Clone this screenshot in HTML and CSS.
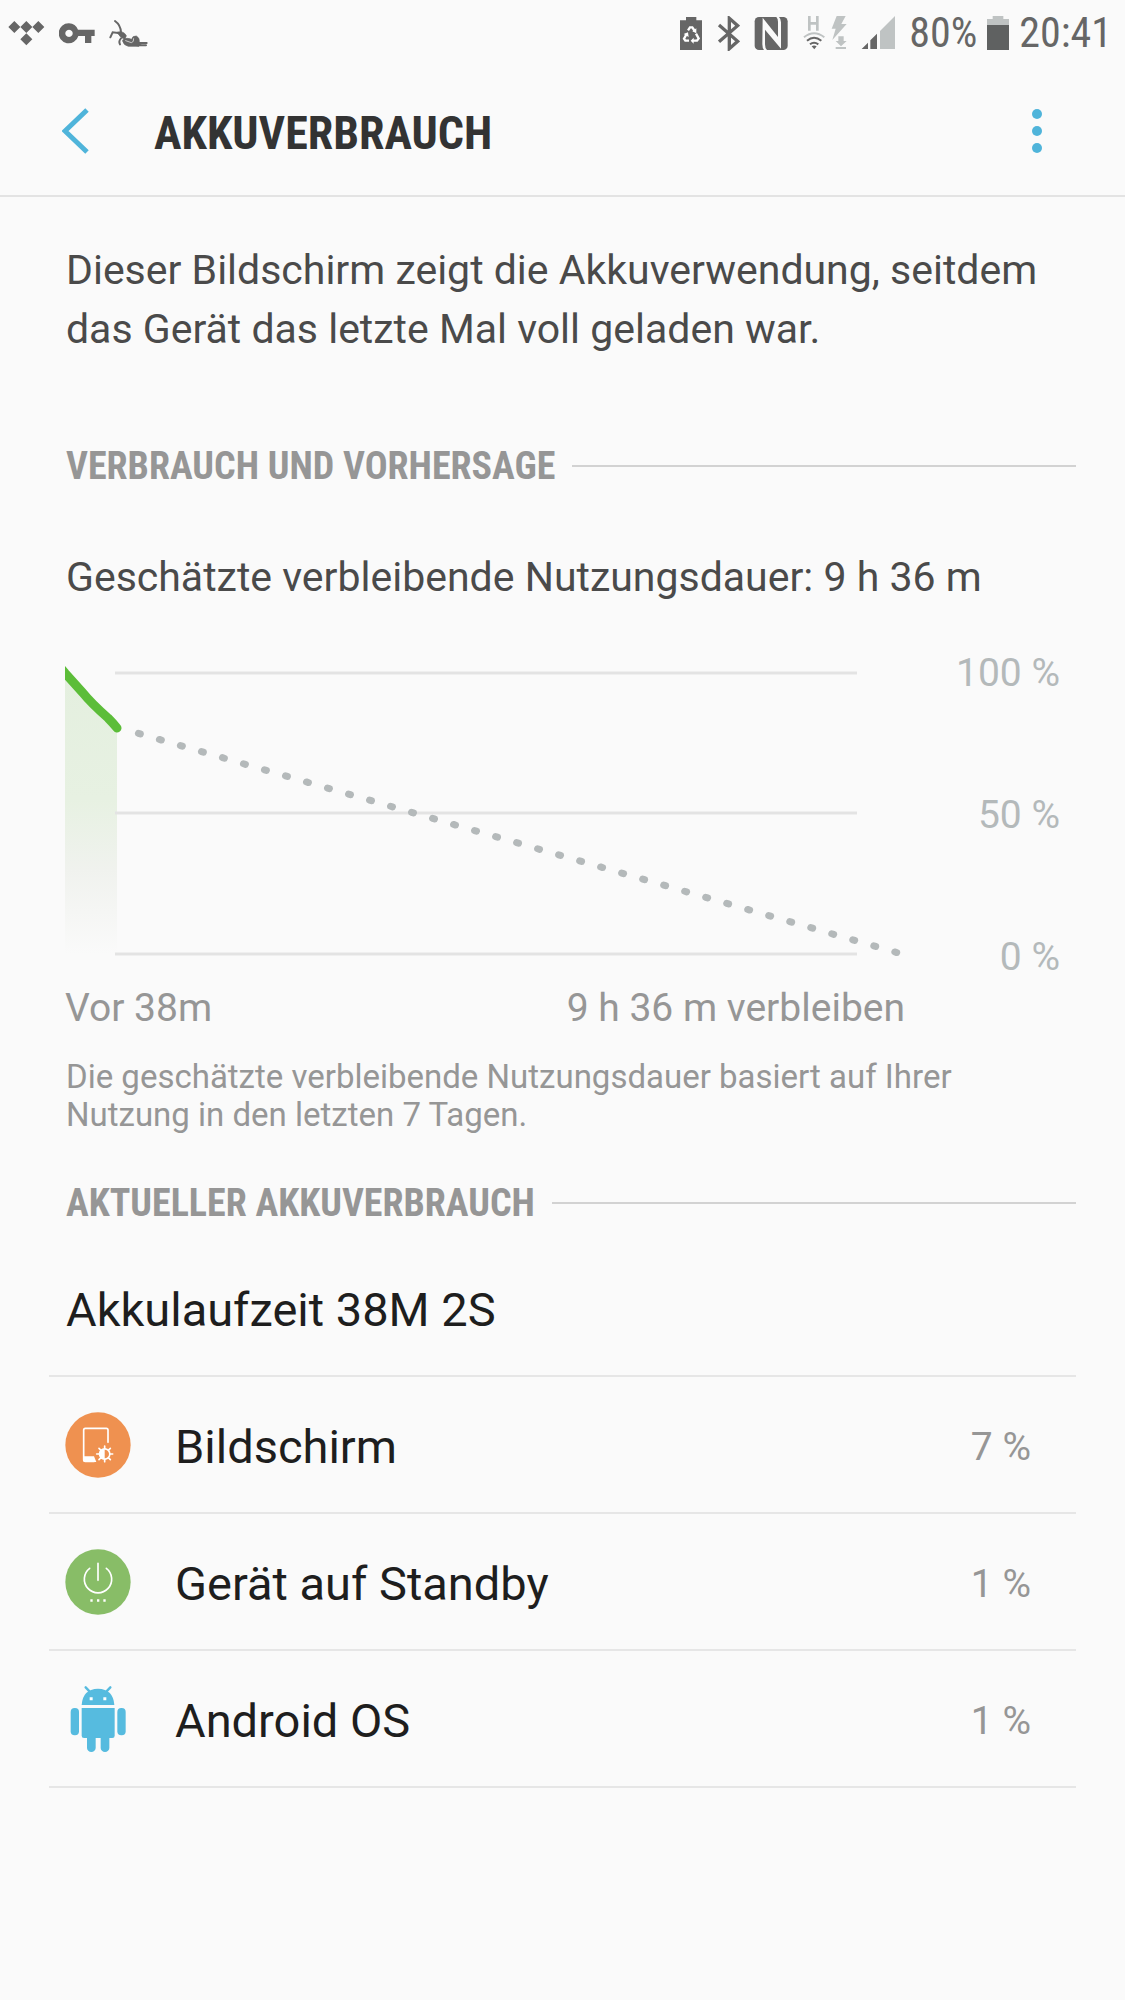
FILE: index.html
```html
<!DOCTYPE html>
<html lang="de">
<head>
    <meta charset="UTF-8">
    <meta name="viewport" content="width=device-width, initial-scale=1.0">
    <title>Akkuverbrauch</title>
    <link rel="stylesheet" href="styles.css">
</head>
<body>

    <div class="status-bar">
        <div class="status-icons">
            <svg width="37" height="35" viewBox="24 45 111 105" fill="#666">
                <path d="M43 60l18 18-18 18-18-18zM79 60l18 18-18 18-18-18zM115 60l18 18-18 18-18-18zM79 97l18 18-18 18-18-18z"/>
            </svg>
            <svg width="36" height="35" viewBox="172 45 108 105" fill="#666">
                <path fill-rule="evenodd" d="M202 67a30 30 0 0 1 27 19h50v19h-10v21h-19v-21h-20a30 30 0 1 1-28-38zm0 19a11 11 0 1 0 .1 0z"/>
            </svg>
            <svg width="39" height="35" viewBox="316 45 117 105" fill="none" stroke="#666" stroke-linecap="round">
                <path stroke-width="6" d="M334 60q17 12 18 34M350 97l-23-3-7 15M352 112q-8 8-3 18M404 126h25M400 133h27"/>
                <path fill="#666" stroke-width="2" d="M342 93q18-4 26 11l-4 11q-12-2-22-18z"/>
                <path fill="#666" stroke-width="2" d="M358 116q12-8 26-1 2-11 14-10 10 5 9 17l5 8-6 6h-32q-14-3-17-15z"/>
                <path stroke="#fafafa" stroke-width="2" d="M366 119l17 6q8-1 7-12"/>
            </svg>
        </div>
        <div class="status-right">
            <div class="status-icons">
                <svg width="24" height="35" viewBox="36 45 72 105">
                    <path fill="#666" d="M57 48h31v10h17v89H39V58h18z"/>
                    <path fill="none" stroke="#fff" stroke-width="7" d="M63 88l6-9h7l7 11M87 98l8 14-5 7H78M66 119H55l-4-6 8-14"/>
                    <path fill="#fff" d="M88 82v15l-12-6zM80 110v18l-9-9zM50 99l13-5 2 14z"/>
                </svg>
                <svg width="23" height="35" viewBox="150 45 69 105" fill="none" stroke="#666" stroke-width="10">
                    <path d="M156 72l56 49-25 22V52l25 22-56 48"/>
                </svg>
                <svg width="34" height="35" viewBox="258 45 102 105">
                    <rect x="260" y="48" width="99" height="99" rx="13" fill="#666"/>
                    <path fill="#fafafa" d="M284 50l46 58V62q0-9-5-14h8q6 6 6 16v79L291 86v44q0 12 6 17h-9q-5-6-5-17z"/>
                </svg>
                <svg width="45" height="35" viewBox="411 45 135 105">
                    <path fill="none" stroke="#bfc3c3" stroke-width="8" d="M433 45v44M457 45v44M433 67h24"/>
                    <path fill="none" stroke="#bfc3c3" stroke-width="6" d="M417 109q30-24 61 0"/>
                    <path fill="none" stroke="#666" stroke-width="6" d="M426 119q21-18 43 0M435 130q12-10 25 0"/>
                    <path fill="#666" d="M440 136q7-5 15 0l-7 9z"/>
                    <path fill="#bfc3c3" d="M515 45h27l-13 24h16l-43 48 10-34h-12zM520 106h16v14h9l-17 16-16-16h8zM512 138h31v6h-31z"/>
                </svg>
                <svg width="34" height="35" viewBox="585 45 102 105">
                    <path fill="#bfc3c3" d="M642 90l45-45v99h-45z"/>
                    <path fill="#666" d="M587 144l19-19v19zM613 118l20-20v46h-20z"/>
                </svg>
            </div>
            <span>80%</span>
            <svg width="22" height="35" viewBox="297 45 66 105">
                <path fill="#bfc3c3" d="M314 45h32v9h17v19h-66V54h17z"/>
                <path fill="#5f6161" d="M297 72h66v75h-66z"/>
            </svg>
            <span>20:41</span>
        </div>
    </div>

    <header class="header">
        <button class="icon-button" aria-label="Zurück">
            <svg width="28" height="46" viewBox="0 0 28 46" fill="none" stroke="#4fb4da" stroke-width="5">
                <path d="M25 2L3 23l22 21"/>
            </svg>
        </button>
        <h1>AKKUVERBRAUCH</h1>
        <button class="icon-button" aria-label="Weitere Optionen">
            <svg width="12" height="46" viewBox="0 0 12 46" fill="#4fb4da">
                <circle cx="6" cy="6" r="5"/>
                <circle cx="6" cy="23" r="5"/>
                <circle cx="6" cy="40" r="5"/>
            </svg>
        </button>
    </header>

    <main>
        <p class="intro">Dieser Bildschirm zeigt die Akkuverwendung, seitdem das Gerät das letzte Mal voll geladen war.</p>

        <section class="forecast">
            <h2>VERBRAUCH UND VORHERSAGE</h2>
            <p class="estimate">Geschätzte verbleibende Nutzungsdauer: 9 h 36 m</p>

            <div class="chart">
                <svg class="plot" viewBox="0 0 840 330">
                    <defs>
                        <linearGradient id="used" x1="0" y1="0" x2="0" y2="1">
                            <stop offset="0" stop-color="#e4efdf"/>
                            <stop offset="0.45" stop-color="#e7f1e2"/>
                            <stop offset="0.7" stop-color="#f0f2ee"/>
                            <stop offset="1" stop-color="#fafafa"/>
                        </linearGradient>
                    </defs>
                    <path fill="url(#used)" d="M0 23L26 52 43 68 52 78V304H0z"/>
                    <path stroke="#e3e3e3" stroke-width="3" d="M50 23H792M50 163H792M50 304H792"/>
                    <path fill="none" stroke="#b4b9ba" stroke-width="7" stroke-linecap="round" stroke-dasharray="2 19.87" d="M73.4 83.4L832 302.6"/>
                    <path fill="none" stroke="#5cbd39" stroke-width="9" stroke-linecap="round" stroke-linejoin="round" d="M-5 17L0 23 18 43Q26 53 43 68 48 73 52 78"/>
                </svg>
                <div class="scale">
                    <span>100 %</span>
                    <span>50 %</span>
                    <span>0 %</span>
                </div>
                <div class="axis">
                    <span>Vor 38m</span>
                    <span>9 h 36 m verbleiben</span>
                </div>
            </div>

            <p class="note">Die geschätzte verbleibende Nutzungsdauer basiert auf Ihrer Nutzung in den letzten 7 Tagen.</p>
        </section>

        <section>
            <h2>AKTUELLER AKKUVERBRAUCH</h2>
            <h3 class="runtime">Akkulaufzeit 38M 2S</h3>

            <ul class="usage">
                <li>
                    <a href="#">
                        <svg width="66" height="66" viewBox="0 0 198 198">
                            <circle cx="99" cy="99" r="98" fill="#ef9150"/>
                            <path fill="none" stroke="#fff" stroke-width="5" stroke-linecap="round" d="M129 91V54q0-5-5-5H61q-5 0-5 5v89q0 5 5 5h27"/>
                            <path fill="#fff" d="M55 133h32l7 17H61q-6 0-6-6z"/>
                            <path stroke="#fff" stroke-width="5" stroke-linecap="round" d="M119 102v47M95 126h48M102 109l34 34M136 109l-34 34"/>
                            <circle cx="119" cy="126" r="18" fill="#fff"/>
                            <path fill="#ef9150" d="M119 113a13 13 0 0 1 0 26z"/>
                        </svg>
                        <span class="name">Bildschirm</span>
                        <span class="percent">7 %</span>
                    </a>
                </li>
                <li>
                    <a href="#">
                        <svg width="66" height="66" viewBox="0 0 198 198">
                            <circle cx="99" cy="99" r="98" fill="#88bd67"/>
                            <path fill="none" stroke="#fff" stroke-width="5" stroke-linecap="round" d="M99 43v51M74 58A41 41 0 1 0 124 58"/>
                            <path fill="#fff" d="M76 151h7v7h-7zM96 151h7v7h-7zM115 151h7v7h-7z"/>
                        </svg>
                        <span class="name">Gerät auf Standby</span>
                        <span class="percent">1 %</span>
                    </a>
                </li>
                <li>
                    <a href="#">
                        <svg width="66" height="66" viewBox="0 0 198 198" fill="#56bbdf">
                            <path stroke="#56bbdf" stroke-width="7" stroke-linecap="round" d="M62 4l15 16M136 4l-15 16"/>
                            <path d="M50 57q3-48 49-49 46 1 49 49z"/>
                            <path fill="#fff" d="M74 34h9v9h-9zM115 34h9v9h-9z"/>
                            <path d="M50 66h99v83q0 7-7 7H57q-7 0-7-7z"/>
                            <rect x="17" y="66" width="25" height="82" rx="12"/>
                            <rect x="157" y="66" width="25" height="82" rx="12"/>
                            <path d="M66 150h26v36a13 12 0 0 1-26 0zM107 150h26v36a13 12 0 0 1-26 0z"/>
                        </svg>
                        <span class="name">Android OS</span>
                        <span class="percent">1 %</span>
                    </a>
                </li>
            </ul>
        </section>
    </main>

</body>
</html>
```

FILE: styles.css
```css
* {
    box-sizing: border-box;
}
body {
    margin: 0;
    background-color: #fafafa;
    color: #1e1e1e;
    font-family: Roboto, 'Noto Sans', sans-serif;
}
h1, h2, h3, p, ul {
    margin: 0;
    padding: 0;
}
svg {
    display: block;
    flex-shrink: 0;
}
.status-bar {
    display: flex;
    justify-content: space-between;
    align-items: center;
    height: 66px;
    padding: 0 13px 0 8px;
    color: #666;
    font-family: 'Roboto Condensed', Roboto, sans-serif;
    font-size: 42px;
    line-height: 48px;
}
.status-right {
    display: flex;
    align-items: center;
    gap: 10px;
}
.status-icons {
    display: flex;
    align-items: center;
    gap: 14px;
    padding-right: 4px;
}
.header {
    display: flex;
    align-items: center;
    height: 131px;
    padding: 0 82px 0 62px;
    border-bottom: 2px solid #e3e3e3;
}
.header h1 {
    flex: 1;
    padding: 4px 0 0 64px;
    color: #333;
    font-family: 'Roboto Condensed', Roboto, sans-serif;
    font-size: 46px;
    line-height: 54px;
}
.icon-button {
    padding: 0;
    border: none;
    background: none;
    cursor: pointer;
}
main {
    padding: 44px 49px 40px;
}
.intro,
.estimate {
    padding: 0 17px;
    color: #4a4a4a;
    font-size: 41px;
    line-height: 59px;
}
h2 {
    display: flex;
    align-items: center;
    gap: 17px;
    padding-left: 17px;
    color: #969696;
    font-family: 'Roboto Condensed', Roboto, sans-serif;
    font-size: 38px;
    line-height: 48px;
}
h2::after {
    content: "";
    flex: 1;
    height: 2px;
    background-color: #d2d2d2;
}
.forecast {
    padding: 83px 0 45px;
}
.estimate {
    padding-top: 58px;
}
.chart {
    display: grid;
    grid-template-columns: 1fr 155px;
    row-gap: 5px;
    padding: 43px 16px 0;
}
.plot {
    width: 100%;
}
.scale {
    display: flex;
    flex-direction: column;
    justify-content: space-between;
    color: #b4b9ba;
    font-size: 39px;
    line-height: 46px;
    text-align: right;
}
.axis {
    display: flex;
    justify-content: space-between;
    color: #969696;
    font-size: 39px;
    line-height: 46px;
}
.note {
    padding: 27px 96px 0 17px;
    color: #969696;
    font-size: 33px;
    line-height: 38px;
}
.runtime {
    padding: 56px 17px 38px;
    border-bottom: 2px solid #e6e6e6;
    font-size: 47px;
    font-weight: normal;
    line-height: 54px;
}
.usage {
    list-style: none;
}
.usage a {
    display: flex;
    align-items: center;
    height: 137px;
    padding: 0 45px 0 16px;
    border-bottom: 2px solid #e6e6e6;
    color: inherit;
    text-decoration: none;
}
.name {
    flex: 1;
    padding: 4px 0 0 44px;
    font-size: 47px;
    line-height: 54px;
}
.percent {
    padding-top: 4px;
    color: #969696;
    font-size: 39px;
    line-height: 46px;
}
```
